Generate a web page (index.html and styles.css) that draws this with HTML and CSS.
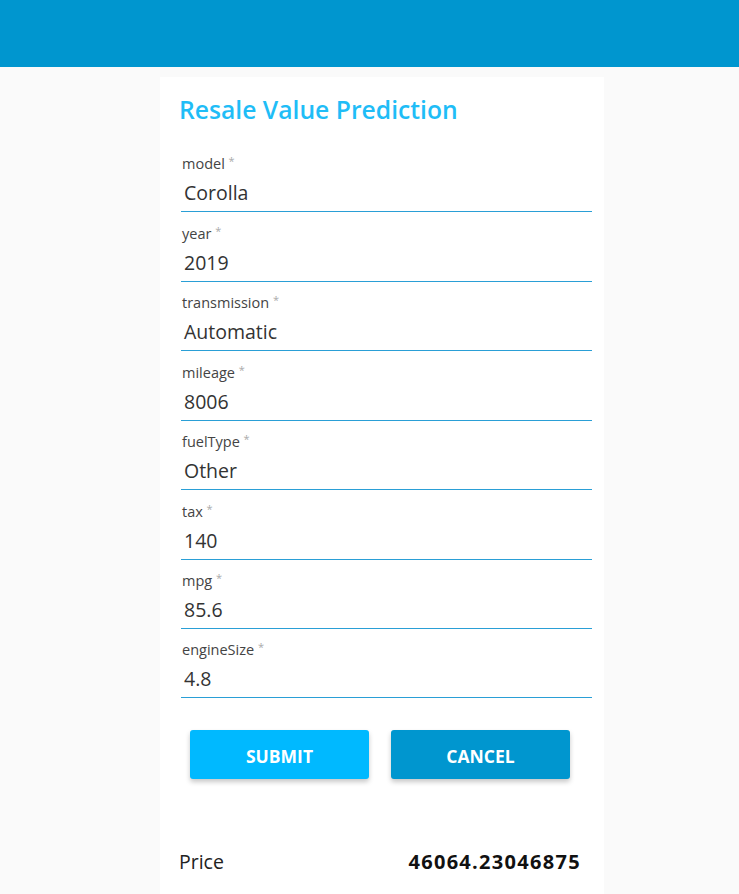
FILE: index.html
```html
<!DOCTYPE html>
<html>
<head>
<meta charset="utf-8">
<link rel="stylesheet" href="styles.css">
</head>
<body>
<header class="topbar"></header>
<main class="card">
  <h1 class="title">Resale Value Prediction</h1>
  <form class="form">
    <div class="field"><label class="label">model <span class="req">*</span></label><div class="value">Corolla</div></div>
    <div class="field"><label class="label">year <span class="req">*</span></label><div class="value">2019</div></div>
    <div class="field"><label class="label">transmission <span class="req">*</span></label><div class="value">Automatic</div></div>
    <div class="field"><label class="label">mileage <span class="req">*</span></label><div class="value">8006</div></div>
    <div class="field"><label class="label">fuelType <span class="req">*</span></label><div class="value">Other</div></div>
    <div class="field"><label class="label">tax <span class="req">*</span></label><div class="value">140</div></div>
    <div class="field"><label class="label">mpg <span class="req">*</span></label><div class="value">85.6</div></div>
    <div class="field"><label class="label">engineSize <span class="req">*</span></label><div class="value">4.8</div></div>
    <div class="actions">
      <button type="button" class="btn btn-submit">SUBMIT</button>
      <button type="button" class="btn btn-cancel">CANCEL</button>
    </div>
  </form>
  <div class="result">
    <span class="result-label">Price</span>
    <span class="result-value">46064.23046875</span>
  </div>
</main>
</body>
</html>
```
FILE: styles.css
```css
html, body {
  margin: 0;
  padding: 0;
  background: #fafafa;
  font-family: "Open Sans", "Noto Sans", sans-serif;
  color: #333;
}
.topbar {
  height: 67px;
  background: #0096cf;
}
.card {
  width: 444px;
  margin: 10px 0 0 160px;
  background: #fff;
  padding: 16px 0 20px 0;
  min-height: 820px;
  box-sizing: border-box;
}
.title {
  margin: 0 0 0 19px;
  font-size: 24.7px;
  line-height: 34px;
  font-weight: 600;
  color: #1fbdf7;
  height: 34px;
}
.form {
  margin: 16px 12px 0 21px;
}
.field {
  height: 69.43px;
  box-sizing: border-box;
  padding: 8.4px 0 0 1px;
  border-bottom: 1px solid #2a9fd6;
}
.label {
  display: block;
  font-size: 14.5px;
  line-height: 20px;
  color: #444;
  margin-bottom: 4px;
}
.req {
  color: #aaa;
  font-size: 11px;
  vertical-align: 4px;
}
.value {
  font-size: 19.5px;
  line-height: 30px;
  color: #333;
  padding-left: 2px;
}
.actions {
  display: flex;
  gap: 22px;
  margin: 32px 0 0 9px;
}
.btn {
  width: 179px;
  height: 49px;
  border: none;
  border-radius: 3px;
  color: #fff;
  font-family: "Open Sans", "Noto Sans", sans-serif;
  font-weight: 700;
  font-size: 17.5px;
  padding-top: 3px;
  box-shadow: 0 3px 5px rgba(0,0,0,0.22);
}
.btn-submit { background: #00b9ff; }
.btn-cancel { background: #0096cf; }
.result {
  display: flex;
  justify-content: space-between;
  align-items: baseline;
  margin: 68px 24px 0 19px;
  font-size: 19.5px;
  line-height: 30px;
}
.result-label { color: #222; }
.result-value { font-weight: 700; color: #111; font-size: 20px; letter-spacing: 1.3px; margin-right: -1px; }
```
